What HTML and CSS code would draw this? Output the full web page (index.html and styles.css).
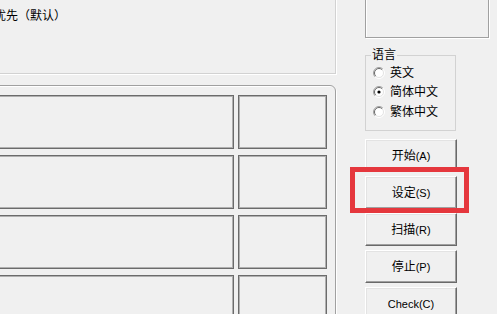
FILE: index.html
```html
<!DOCTYPE html>
<html lang="zh-CN">
<head>
<meta charset="utf-8">
<title>设定</title>
<link rel="stylesheet" href="styles.css">
</head>
<body>
<div class="app">
  <div class="left">
    <div class="opt-frame"><span class="opt-text">优先（默认）</span></div>
    <div class="grid-frame">
      <div class="cell"></div><div class="cell"></div>
      <div class="cell"></div><div class="cell"></div>
      <div class="cell"></div><div class="cell"></div>
      <div class="cell"></div><div class="cell"></div>
    </div>
  </div>
  <div class="right">
    <div class="top-box"></div>
    <fieldset class="lang">
      <legend>语言</legend>
      <label class="radio"><svg class="rb" width="12" height="12" viewBox="0 0 12 12"><circle cx="6" cy="6" r="5" fill="#fff"/><path d="M2.1 9.9A5.5 5.5 0 0 1 9.9 2.1" stroke="#a0a0a0" fill="none"/><path d="M2.8 9.2A4.5 4.5 0 0 1 9.2 2.8" stroke="#696969" fill="none"/><path d="M9.9 2.1A5.5 5.5 0 0 1 2.1 9.9" stroke="#fff" fill="none"/><path d="M9.2 2.8A4.5 4.5 0 0 1 2.8 9.2" stroke="#e3e3e3" fill="none"/></svg>英文</label>
      <label class="radio"><svg class="rb" width="12" height="12" viewBox="0 0 12 12"><circle cx="6" cy="6" r="5" fill="#fff"/><path d="M2.1 9.9A5.5 5.5 0 0 1 9.9 2.1" stroke="#a0a0a0" fill="none"/><path d="M2.8 9.2A4.5 4.5 0 0 1 9.2 2.8" stroke="#696969" fill="none"/><path d="M9.9 2.1A5.5 5.5 0 0 1 2.1 9.9" stroke="#fff" fill="none"/><path d="M9.2 2.8A4.5 4.5 0 0 1 2.8 9.2" stroke="#e3e3e3" fill="none"/><circle cx="6" cy="6" r="1.6" fill="#000"/></svg>简体中文</label>
      <label class="radio"><svg class="rb" width="12" height="12" viewBox="0 0 12 12"><circle cx="6" cy="6" r="5" fill="#fff"/><path d="M2.1 9.9A5.5 5.5 0 0 1 9.9 2.1" stroke="#a0a0a0" fill="none"/><path d="M2.8 9.2A4.5 4.5 0 0 1 9.2 2.8" stroke="#696969" fill="none"/><path d="M9.9 2.1A5.5 5.5 0 0 1 2.1 9.9" stroke="#fff" fill="none"/><path d="M9.2 2.8A4.5 4.5 0 0 1 2.8 9.2" stroke="#e3e3e3" fill="none"/></svg>繁体中文</label>
    </fieldset>
    <div class="buttons">
      <button class="btn">开始<span class="lat">(A)</span></button>
      <button class="btn">设定<span class="lat">(S)</span></button>
      <button class="btn">扫描<span class="lat">(R)</span></button>
      <button class="btn">停止<span class="lat">(P)</span></button>
      <button class="btn"><span class="lat">Check(C)</span></button>
    </div>
  </div>
</div>
<div class="mark"></div>
</body>
</html>
```

FILE: styles.css
```css
html, body {
  margin: 0;
  padding: 0;
}
body {
  width: 497px;
  height: 314px;
  overflow: hidden;
  background: #f0f0f0;
  font-family: "Liberation Sans", "Noto Sans CJK SC", sans-serif;
  font-size: 12px;
  color: #000;
  position: relative;
}
.app {
  display: flex;
  align-items: flex-start;
  margin-left: -20px;
  height: 314px;
  overflow: hidden;
}
.left {
  width: 356px;
  flex: none;
}
.opt-frame {
  box-sizing: border-box;
  margin-top: -10px;
  height: 84px;
  border: 1px solid #d2d2d2;
  box-shadow: 1px 1px 0 #fff, inset 1px 1px 0 #fff;
  padding: 18px 0 0 13px;
}
.opt-text {
  display: block;
  line-height: 14px;
}
.grid-frame {
  box-sizing: border-box;
  margin-top: 11px;
  height: 260px;
  border: 1px solid #a0a0a0;
  border-top-right-radius: 6px;
  box-shadow: inset 1px 1px 0 #fff, 1px 1px 0 #fff;
  padding: 9px 8px 0 0;
  display: grid;
  grid-template-columns: 1fr 89px;
  grid-auto-rows: 54px;
  column-gap: 4px;
  row-gap: 6px;
}
.cell {
  border: 1px solid #6b6b6b;
  box-shadow: inset 0 0 0 1px #b0b0b0;
}
.right {
  margin-left: 29px;
  width: 124px;
  flex: none;
  display: flex;
  flex-direction: column;
}
.right > * {
  flex-shrink: 0;
}
.top-box {
  box-sizing: border-box;
  margin-top: -10px;
  height: 48px;
  border: 1px solid #a0a0a0;
  box-shadow: 1px 1px 0 #fff, inset 1px 1px 0 #fff;
}
.lang {
  box-sizing: border-box;
  margin: 10px 0 0 0;
  width: 91px;
  height: 83px;
  border: 1px solid #d2d2d2;
  padding: 1px 0 0 7px;
  min-width: 0;
}
.lang legend {
  padding: 0 1px;
  margin-left: -2px;
  line-height: 14px;
}
.radio {
  display: flex;
  align-items: center;
  gap: 5px;
  height: 19.5px;
  line-height: 14px;
}
.rb {
  flex: none;
}
.buttons {
  margin-top: 8px;
  display: flex;
  flex-direction: column;
  gap: 4px;
}
.btn {
  box-sizing: border-box;
  flex: none;
  width: 92px;
  height: 33px;
  margin: 0;
  padding: 0;
  background: #f0f0f0;
  border-top: 1px solid #fff;
  border-left: 1px solid #fff;
  border-right: 1px solid #696969;
  border-bottom: 1px solid #696969;
  box-shadow: inset -1px -1px 0 #a0a0a0, inset 1px 1px 0 #e3e3e3;
  font-family: "Liberation Sans", "Noto Sans CJK SC", sans-serif;
  font-size: 12px;
  line-height: 14px;
  color: #000;
}
.lat {
  font-size: 11px;
}
.mark {
  position: absolute;
  left: 350px;
  top: 167px;
  width: 119px;
  height: 46px;
  box-sizing: border-box;
  border: 5px solid #e5373d;
}
```
